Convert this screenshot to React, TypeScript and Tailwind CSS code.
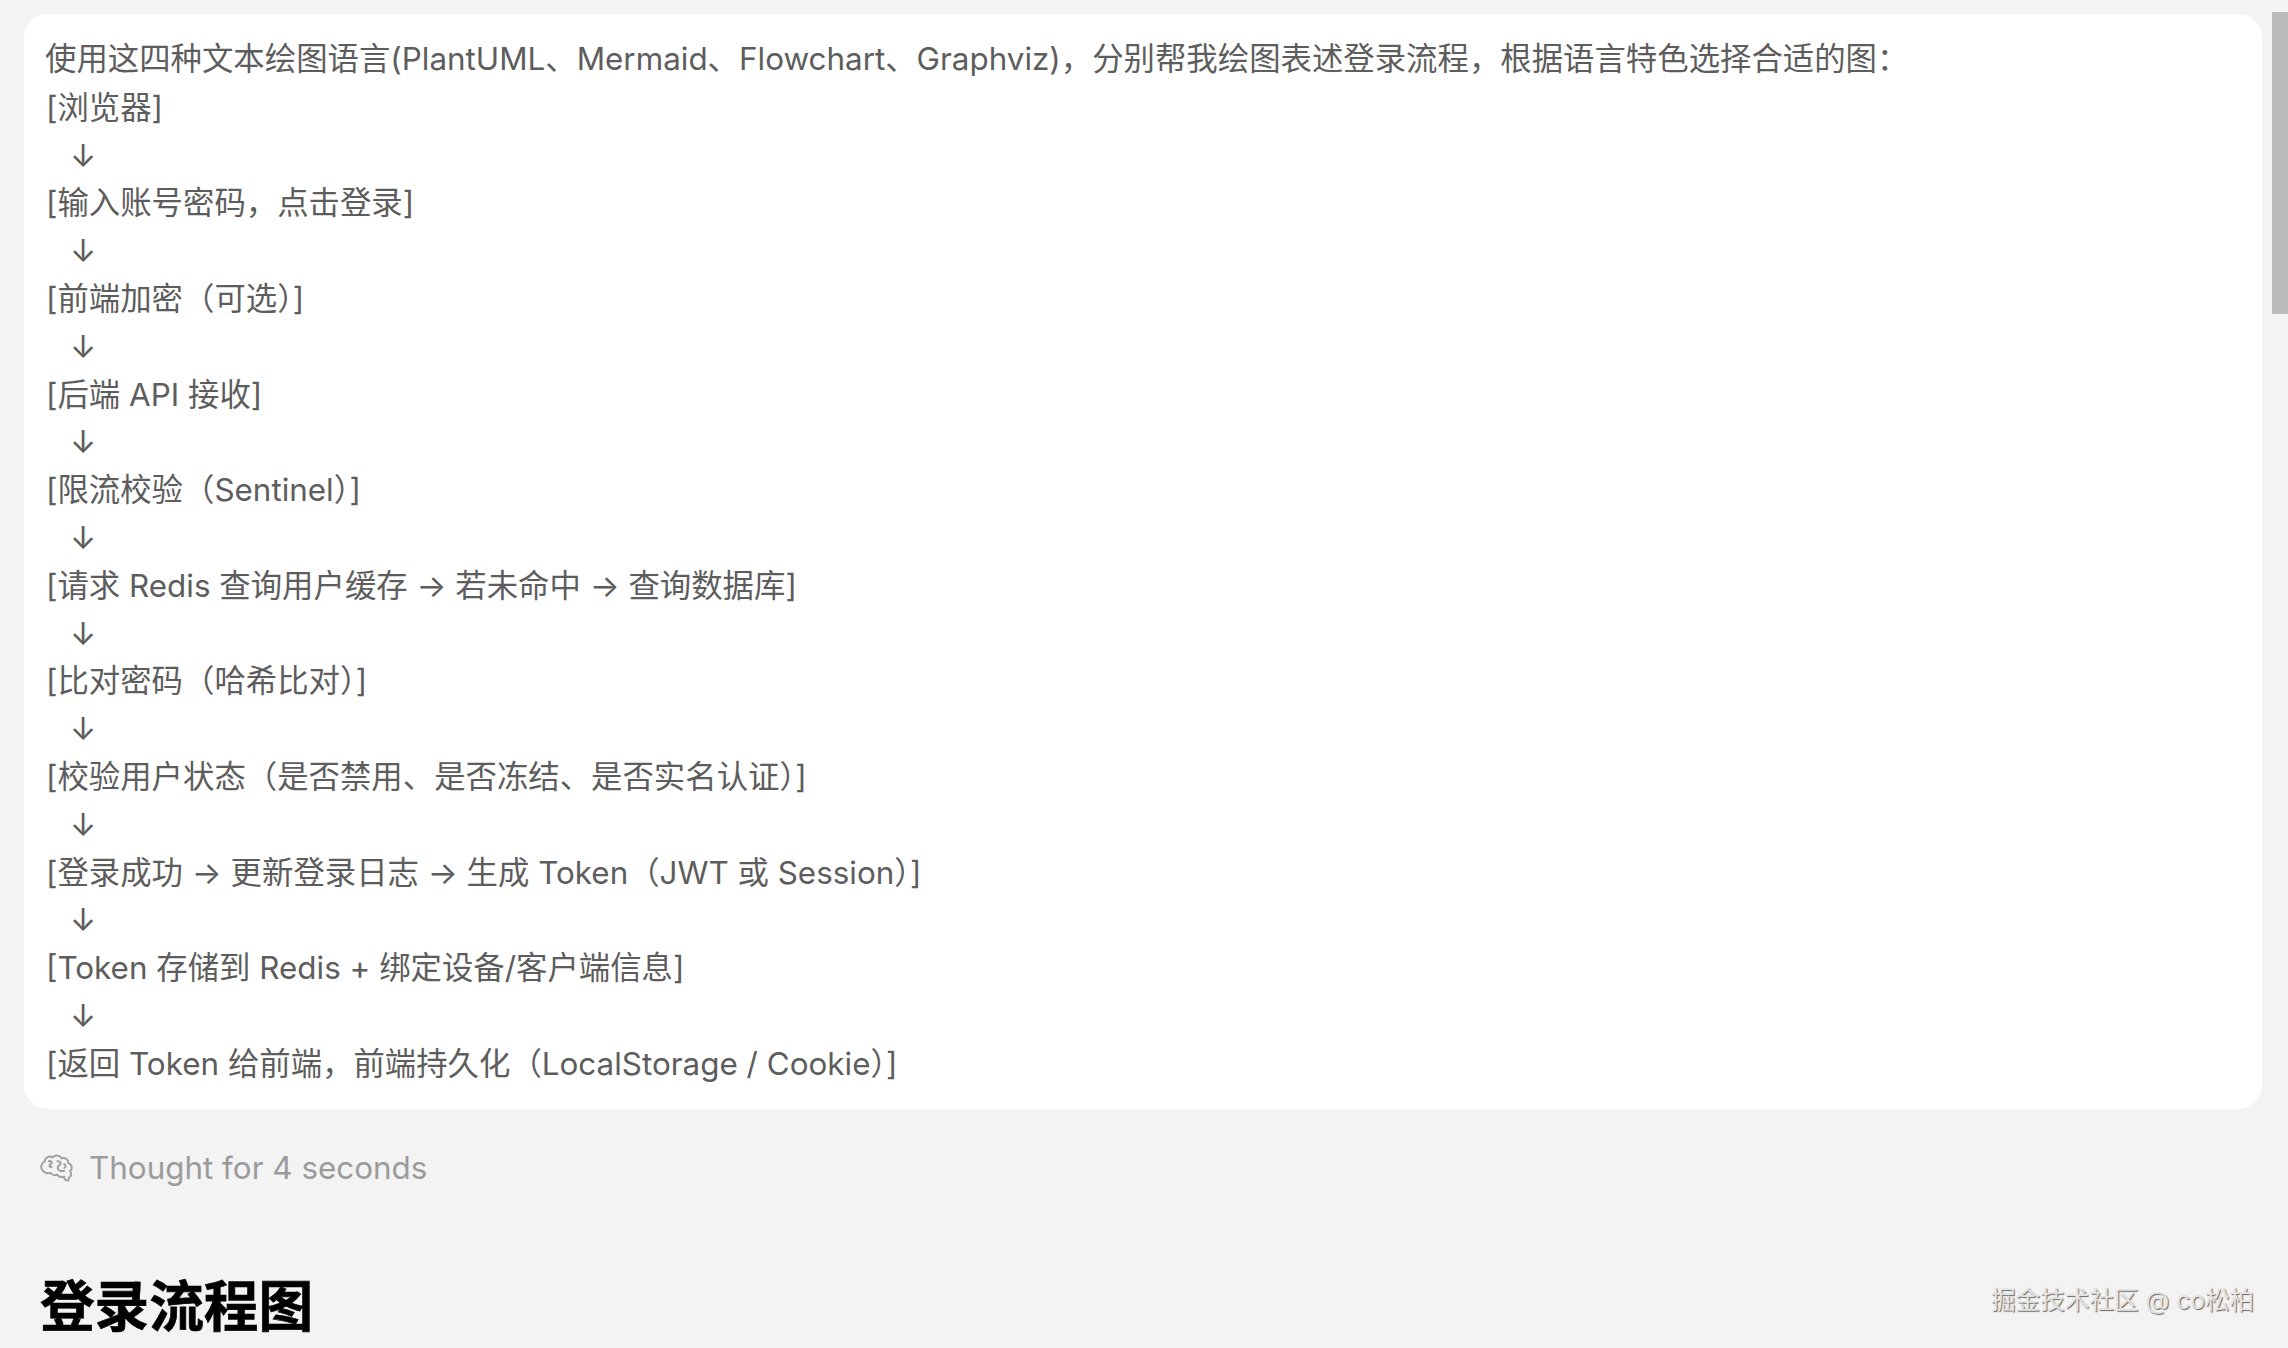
const FONT = "font-['Inter','Noto_Sans_CJK_SC',sans-serif]";

const lines = [
  "[浏览器]",
  "[输入账号密码，点击登录]",
  "[前端加密（可选）]",
  "[后端 API 接收]",
  "[限流校验（Sentinel）]",
  "[请求 Redis 查询用户缓存 → 若未命中 → 查询数据库]",
  "[比对密码（哈希比对）]",
  "[校验用户状态（是否禁用、是否冻结、是否实名认证）]",
  "[登录成功 → 更新登录日志 → 生成 Token（JWT 或 Session）]",
  "[Token 存储到 Redis + 绑定设备/客户端信息]",
  "[返回 Token 给前端，前端持久化（LocalStorage / Cookie）]",
];

function BrainIcon() {
  return (
    <svg width="33" height="30" viewBox="-1 -1 34 30" fill="none" stroke="#a0a0a0" strokeWidth="2" strokeLinecap="round" strokeLinejoin="round">
      <path d="M2 17C-1 14 0 9 4 7C4 3 9 1 12 3C15 0 20 1 21 4C25 3 29 6 28 9C32 10 33 15 30 17C32 20 31 23 29 24L28 27C26 27 24 26 24 23C21 24 18 23 17 21C14 22 11 21 10 19C7 20 4 19 2 17Z" />
      <path d="M8 7C11 6 12 9 10 10C8 11 8 13 11 13" />
      <path d="M17 7C21 7 21 10 19 11C16 13 17 16 20 17L24 17" />
      <path d="M24 10C26 11 26 13 24 14" />
    </svg>
  );
}

export default function App() {
  return (
    <div className={`relative h-[1348px] w-[2288px] overflow-hidden bg-[#f3f3f3] ${FONT}`}>
      <div className="pl-[24px] pt-[14px]">
        <div className="w-[2238px] rounded-[24px] bg-white pb-[20px] pl-[21px] pt-[23px] text-[31.4px] leading-[47.8px] text-[#5d5d5d]">
          <div className="-mt-[1px] mb-[1px]">使用这四种文本绘图语言(PlantUML、Mermaid、Flowchart、Graphviz)，分别帮我绘图表述登录流程，根据语言特色选择合适的图：</div>
          {lines.map((line, i) => (
            <div key={line} className="pl-[1px]">
              <div>{line}</div>
              {i < lines.length - 1 && <div className="pl-[24px]">↓</div>}
            </div>
          ))}
        </div>
        <div className="mt-[37px] flex items-center gap-[16px] pl-[16px] text-[31.4px] leading-[44px] text-[#9b9b9b]">
          <BrainIcon />
          <span>Thought for 4 seconds</span>
        </div>
        <h1 className="mt-[80px] pl-[16px] text-[54.6px] font-bold leading-[72px] text-black [-webkit-text-stroke:0.7px_black]">登录流程图</h1>
      </div>
      <div className="absolute right-0 top-[12px] h-[302px] w-[16px] bg-[#bbbbbb]" />
      <div className="absolute left-[1991px] top-[1282px] text-[24.6px] leading-[36px] text-[#e4e4e4] [text-shadow:1px_1px_1px_#666]">
        掘金技术社区 @ co松柏
      </div>
    </div>
  );
}
